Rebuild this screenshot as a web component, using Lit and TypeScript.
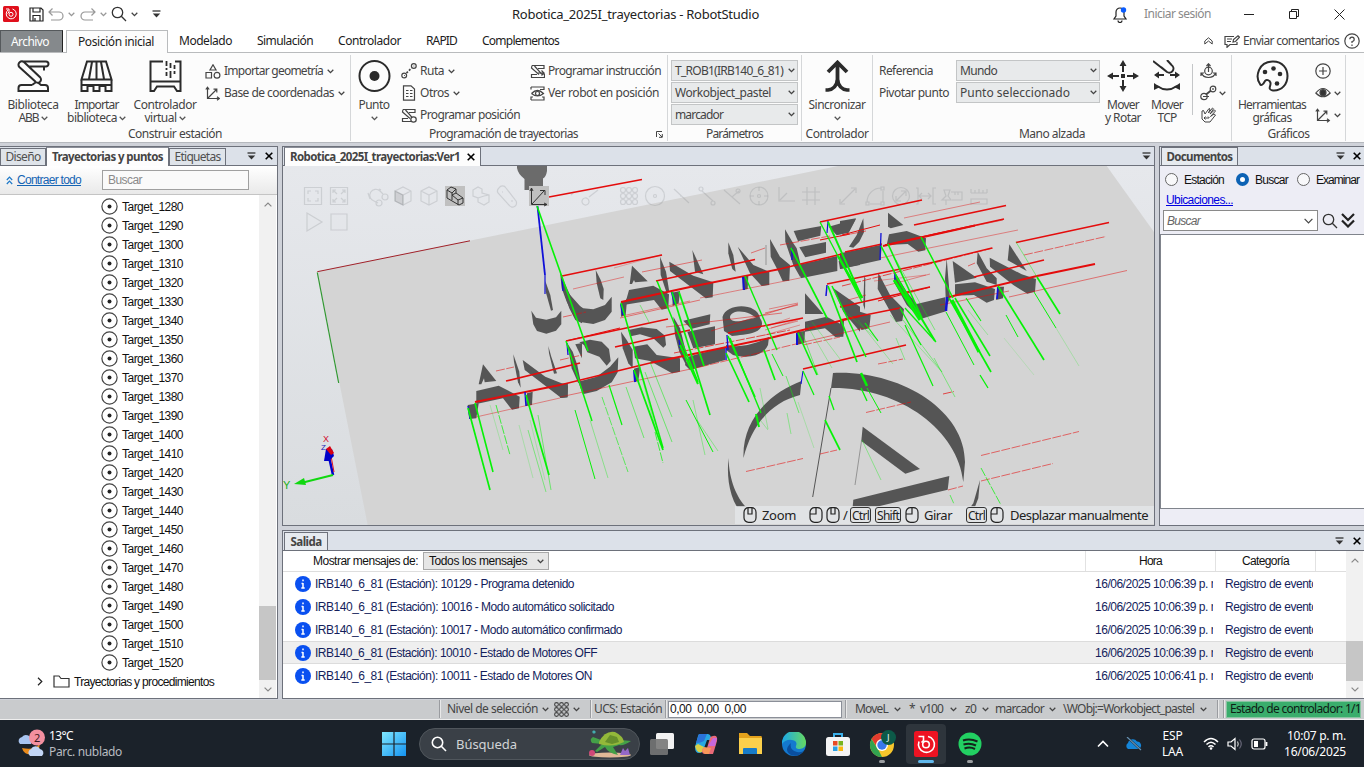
import { LitElement, html, svg, css, unsafeCSS } from "lit";
import { customElement, property } from "lit/decorators.js";

const spacing = unsafeCSS(
  Array.from({ length: 72 }, (_, i) => `.ml${i}{margin-left:${i}px}`).join("")
);

/** Label whose tracking is tuned so that the text takes a given width. */
@customElement("fit-text")
class FitText extends LitElement {
  @property() text = "";
  @property({ type: Number }) w = 0;
  static styles = css`
    :host { display: inline-block; white-space: pre; flex: none; }
  `;
  firstUpdated() {
    const natural = this.getBoundingClientRect().width;
    this.style.letterSpacing = `${(this.w - natural) / this.text.length}px`;
    this.style.width = `${this.w}px`;
  }
  render() {
    return html`${this.text}`;
  }
}

const t = (text: string, w: number, cls = "") =>
  html`<fit-text class=${cls} .text=${text} .w=${w}></fit-text>`;
const ic = (w: number, h: number, body: unknown, cls = "") =>
  html`<svg class="ic ${cls}" width=${w} height=${h} viewBox="0 0 ${w} ${h}">${body}</svg>`;
const chev = (cls = "") => ic(7, 5, svg`<path d="M.7.8 3.5 3.6 6.3.8" stroke-width="1.3"/>`, cls);
const pin = (cls = "") =>
  ic(9, 8, svg`<path d="M.5 1H8.5" stroke="#222"/><path d="M.8 3.6H8.2L4.5 7.6z" fill="#333" stroke="none"/>`, cls);
const cross = (cls = "") => ic(8, 8, svg`<path d="M.7.7 7.3 7.3M7.3.7.7 7.3" stroke="#000" stroke-width="1.6"/>`, cls);

const robotArm = svg`<path d="M2.300 7 18.300 21.500A3.200 3.200 0 0 0 23.300 17.500L7.500 2.500A3.200 3.200 0 0 0 2.300 7zM5 1.500H29A2.500 2.500 0 0 1 29 6.500H12M27 6.500V10.500M15 25H4.500A3 3 0 0 0 1.500 28V31H31V28A3 3 0 0 0 28 25H24L21 22.500M15 25 18.500 22.500"/>`;
const miniArm = svg`<path d="M2 1.500H14V4.500H8M2 1.500 1.500 4 9 10.500M4.500 2 11.500 10H14.500V13.500H1.500V10.500H7"/>`;
const axes = svg`<path d="M2.500 1.500V12.500H14M2.500 12.500 11.500 3.500M.8 3.500 2.500 1.200 4.200 3.500M12 10.800 14.300 12.500 12 14.200M8.500 3.200H11.800V6.500"/>`;
const magnifier = (s: string, w = 1.3) => svg`<circle cx="6.500" cy="6.500" r="5.200" stroke=${s} stroke-width=${w}/><path d="M10.300 10.300 15 15" stroke=${s} stroke-width=${w}/>`;

/* ---- 3D scene geometry ---- */
const project = (ox: number, oy: number, list: string[]) =>
  list.map((p) =>
    p.split(" ").map((pt) => {
      const [x, y] = pt.split(",").map(Number);
      return `${(ox + x / 3).toFixed(1)},${(oy + y / 3).toFixed(1)}`;
    }).join(" ")
  );

const solids = [
  ...project(282, 145, [
    "790,408 805,450 813,495 807,497 791,440",
    "748,497 762,518 793,524 822,517 838,497 838,538 822,557 793,566 765,558 754,538",
    "843,420 856,440 900,490 900,535 880,525 862,490 845,440",
    "603,658 643,708 608,712 606,700 598,718 590,718",
    "583,738 650,722 713,755 711,790 690,794 663,760 583,777",
    "557,780 590,775 583,820 562,822",
    "694,628 712,680 716,728 708,712 696,650",
    "722,645 790,695 858,722 857,757 838,759 728,675",
    "799,603 808,635 825,685 816,686 801,625",
    "735,745 752,740 750,780 732,783",
    "880,598 900,594 900,640",
  ]),
  ...project(560, 165, [
    "0,320 10,345 28,385 45,425 60,460 40,450 20,410 5,370",
    "33,395 45,415 70,430 100,433 135,420 155,395 155,440 135,465 100,477 65,472 40,448",
    "107,315 122,345 131,372 130,405 121,400 110,355",
    "216,302 263,349 225,352 222,345 216,357 209,357",
    "207,375 280,362 327,388 325,430 305,434 282,405 190,420 200,400",
    "182,412 201,406 197,450 183,455",
    "300,275 318,320 328,380 318,378 302,330",
    "328,290 400,332 460,352 458,397 437,400 385,360 330,318",
    "397,255 413,290 430,328 405,320",
    "336,383 360,378 356,415 338,423",
    "505,232 520,270 527,320 517,312 505,265",
    "533,245 580,300 628,320 628,360 605,363 570,325",
    "630,222 660,275 690,300 688,347 668,349 650,310 632,275",
    "548,334 565,332 563,372 548,375",
    "675,193 697,230 710,250 722,300 720,335 700,300 676,230",
    "701,198 784,183 781,212 714,229",
    "718,247 798,231 798,263 736,277",
    "712,300 832,273 832,318 722,340",
    "806,185 888,162 866,203 830,211",
    "836,288 900,275 900,300 840,312",
    "0,657 24,654 22,697 0,699",
    "22,535 38,560 52,600 62,650 55,655 35,610",
    "58,532 90,524 125,530 147,552 152,588 140,602 118,575 82,562 72,540",
    "55,650 110,635 150,605 175,577 173,622 155,652 110,678 68,688",
    "183,500 200,525 218,555 218,610 205,595 188,550",
    "205,495 245,487 290,492 315,512 318,540 310,548 280,520 240,508 212,514",
    "220,545 262,538 290,570 360,580 360,620 336,625 270,588 225,580",
    "222,611 241,605 235,648 222,652",
    "340,455 360,490 378,560 378,600 358,560 345,510",
    "370,467 451,448 449,478 393,492",
    "382,500 465,484 465,538 400,550",
    "385,575 495,545 495,585 390,615 375,600",
    "735,385 790,447 735,447",
    "735,470 800,455 852,482 850,515 826,516 795,490 735,500",
    "710,500 735,498 733,534 710,540",
    "818,368 900,425 900,500 850,440",
  ]),
  ...project(840, 145, [
    "0,228 48,220 28,258 0,265",
    "70,220 72,262 58,290 40,308 27,305 50,270",
    "0,325 125,299 122,345 0,372",
    "144,203 190,240 152,250 144,245",
    "147,268 200,258 258,280 256,316 235,320 203,297 140,300",
    "0,445 60,500 92,510 88,550 65,555 0,478",
    "0,525 12,528 10,568 0,572",
    "73,392 76,400 75,495 70,480",
    "115,383 150,450 192,493 187,528 168,531 113,432",
    "164,380 200,440 230,477 315,457 318,499 242,522 200,480 162,412",
    "338,348 410,398 345,413",
    "345,418 405,412 465,432 462,465 440,473 402,450 345,452",
    "320,340 325,400 330,458 318,490 315,400",
    "413,320 440,370 470,400 470,420 440,410 410,355",
    "449,338 545,388 588,402 585,440 562,446 520,420 450,365",
    "508,298 560,378 503,346",
    "475,425 492,425 489,460 468,465",
    "68,845 240,972 196,986 64,888",
    "328,993 323,1034 110,1085 38,1085 40,1064",
    "420,1005 400,1075 392,1085 405,1085 415,1060",
  ]),
];

// Each entry: x1 y1 x2 y2 width
const reds = [
  [549,197,642,179.500,1.500],[562,276,662,255,1.600],[573,289,624,277,.6],[563,317,586,312,.8],[642,272,702,260,.7],[656,281,755,259.500,1.500],
  [621,302,690,287,1.800],[690,287,780,269,1.800],[780,269,842,254,1.600],[620,318,700,300,.7],[700,298,800,278,.6],[751,253,765,248,.7],[780,245,830,236,.8],
  [820,222,922,200,1.500],[904,218,980,202,.6],[914,225,1006,205.500,1.700],[842,235,880,225,1],[820,240,850,234,1.200],[885,245,1004,219,1.400],
  [883,246,975,225.500,1.800],[930,235,1003,220,.7],[840,236,866,231,.8],[880,258,1018,230,.6],[845,252,882,244,1.300],
  [566,341,620,328,1],[566,341,668,319,1.500],[622,316,690,301,.6],[615,347,690,330,1.600],[666,327,782,313,.7],[674,353,790,330,.9],[711,331,798,304,.7],[765,313,798,305,.7],[769,309,798,303,.6],[771,328,798,321,.6],
  [475,402,560,385,2],[560,385,650,363,1.700],[650,363,770,338,1.800],[770,338,860,316,1.900],[506,381,580,363,1.700],[496,371,514,367,.8],[560,360,582,355,.8],[476,417,560,398,.6],[560,397,700,367,.7],
  [700,367,800,343,.8],[728,333,803,318,1.600],[800,343,890,322,.7],[842,286,993,248,.9],[827,284,930,263,1.300],[930,263,992,248,1.300],[840,307,930,287,1.500],[840,320,900,308,1.500],
  [848,300,866,295,.7],[874,281,926,275,.5],[885,286,930,274,.6],[878,301,930,287,1],[949,297,1037,276,2],[1037,276,1095,264,2],[974,277,1044,260,1.400],[1016,242.500,1109,222.500,1.700],[1024,255,1106,236.500,.8],
  [940,305,1009,291,.7],[1009,297,1127,270.500,.7],[968,266,975,263,.8],[803,369,906,345,1.700],[803,345,840,337,.8],[878,364,903,359,.8],[866,412.500,911,402,.8],[943,394,954,391.500,.9],
  [746,471.500,803,458.500,.8],[820,454,837,450,.8],[981,455.500,1079,431.500,.8],[981,481,1053,463.500,.8],[948,490,963,486,.8],[614,268,662,254.500,.4],[765,335,800,325,.5],[765,330,800,319,.5],[767,326,790,318,.5],
] as number[][];

const greens = [
  [537,206,562,277,1.600],[562,277,588,351,1.600],[468,408,490,490,1.700],[475,403,493,472,1.600],[490,405,503,450,.3],[496,405,510,455,.9],[526,395,549,475,1.700],[530,420,545,480,.3],[528,430,546,492,.6],[538,415,551,490,.7],[519,425,533,478,.3],
  [566,341,592,421,1.500],[575,410,595,479,1],[590,420,608,478,.5],[602,397,628,472,.8],[609,385,622,425,1.200],[626,387,644,438,.7],[621,303,663,448,1.600],[634,370,663,450,1.800],[640,370,656,430,.5],[645,372,672,442,.7],[650,362,672,417,.7],[655,432,663,463,.9],[657,281,698,382,1.500],[672,292,710,415,1.700],[679,292,704,366,1.800],[680,345,698,384,2],[686,400,713,452,1],[693,400,705,455,.5],[697,420,718,451,.5],[640,305,650,324,.6],
  [745,276,777,350,1.400],[791,248,827,318,1.700],[820,222,862,302,1.300],[828,222,862,298,1.900],[838,256,862,298,2.500],[726,353,749,402,1.700],[728,336,755,397,1.700],[730,338,761,413,1.400],[764,350,775,380,1.700],[772,354,783,376,1],[760,388,768,429,.4],[756,414,759,427,2],[757,416,768,430,.4],[786,376,799,413,.7],
  [798,333,817,375,1.600],[802,332,818,375,.7],[807,325,832,368,.4],[812,322,840,359,.4],[828,286,857,362,1.700],[832,286,866,357,1.500],[843,310,878,340,.4],[865,323,878,341,1.200],[858,320,893,364,.4],[803,371,814,395,1.200],[798,402,814,448,.3],[787,413,791,434,.5],[829,396,834,410,1.300],[825,420,840,450,1.700],[861,373,867,386,2.500],[861,388,867,401,1.300],[867,388,881,413,1],
  [881,246,912,306,1.600],[888,244,922,318,1.600],[896,260,935,330,.6],[921,237,953,298,1.500],[896,276,935,341,2],[894,280,920,320,3],[905,308,936,342,1.300],[900,308,921,345,1.300],[905,325,933,386,1.200],[890,315,942,372,.4],[903,320,942,372,.6],[896,338,905,360,.5],[934,358,955,397,.6],[949,298,991,372,1.700],[955,298,990,356,1.600],[952,300,979,352,3],[946,312,974,365,1],[966,298,981,321,1.100],[968,310,988,335,.4],[980,375,988,388,1.300],[998,286,1044,360,1.700],[1016,242,1037,277,.6],[1037,277,1060,314,1.700],[1034,292,1056,328,1],[1056,328,1079,366,.3],[1006,315,1018,337,1],[1004,338,1034,375,.2],[862,440,881,480,.5],[981,468,1001,505,.9],[950,495,954,504,.8],
] as number[][];

const blues = [
  [537.500,206,545,275,1.800],[545,275,545,294,1.200],[562,279,563,291,1.300],[621,304,623,315,2],[672,292,675,304,2.500],[743,277,744,290,2],[792,248,792,260,1.400],[828,221,827,233,1.200],[567,343,568,355,1.300],[679,340,680,348,1.300],[634,370,635,382,2],[525,392,526,406,1.500],[468,406,470,419,1.300],[727,335,728,350,1.400],[726,348,726,360,1.400],[797,333,797,345,2],[827,285,826,296,1.500],[881,233,880,260,1.300],[895,273,895,283,1.500],[947,297,946,311,2.500],[998,287,997,299,1.800],[803,371,801,384,1.100],
] as number[][];

const lines = (list: number[][], color: string) =>
  list.map(([a, b, c, d, w]) => svg`<line x1=${a} y1=${b} x2=${c} y2=${d} stroke=${color}
    stroke-width=${Math.max(w, 0.8)} stroke-opacity=${w < 1 ? w * 0.9 : 1}
    stroke-dasharray=${w >= 0.8 && w < 1 ? "9 1.500" : "none"}/>`);

const tool = (x: number, y: number, d: string) =>
  svg`<path transform="translate(${x} ${y})" d=${d}/>`;

@customElement("station-view")
class StationView extends LitElement {
  static styles = css`
    :host { display: block; height: 359px; }
    svg { display: block; }
    text { font: 11px "Liberation Sans", sans-serif; }
    .small { font-size: 8px; }
    .mid { font-size: 9px; }
  `;
  render() {
    const cube = "M-8-5 0-9 8-5V5L0 9-8 5zM-8-5 0-1 8-5M0-1V9";
    return html`<svg width="871" height="359" viewBox="283 166 871 359" fill="none" stroke-linecap="butt">
      <defs><linearGradient id="bg" x1="0" y1="0" x2="0" y2="1">
        <stop offset="0" stop-color="#e6e8ec"/><stop offset="1" stop-color="#d9dcdf"/></linearGradient></defs>
      <rect x="283" y="166" width="871" height="359" fill="url(#bg)"/>
      <path d="M317.300 271.700 838 166H1106.700L1154 232V525H367.700z" fill="#d4d4d4"/>
      <path d="M317.300 271.700 470 240.800" stroke="#a02028"/>
      <path d="M317.300 272.500 338.700 383" stroke="#309830" stroke-width="1.200"/>
      <path d="M517 166H547V171Q546 177 543 178.500V190H524.500V179Q518 174 517 168z" fill="#6b6b6b"/>
      <g stroke="#777c80" stroke-opacity=".22" stroke-width="1.200">
        ${tool(313,196,"M-8.500-8.500H8.500V8.500H-8.500zM-5-2V-5H-2M2-5H5V-2M5 2V5H2M-2 5H-5V2")}
        ${tool(339,196,"M-8.500-8.500H8.500V8.500H-8.500zM-6-6-2-2M6-6 2-2M-6 6-2 2M6 6 2 2M-6-3V-6H-3M3-6H6V-3M6 3V6H3M-3 6H-6V3")}
        ${tool(377,196,"M-3 5A6 6 0 1 1 3-5M3-5 6-2M-3 5 1 7M5 1a3 3 0 1 0 6 0 3 3 0 1 0-6 0M-1 7a3 3 0 1 0 6 0 3 3 0 1 0-6 0M-9-3-7 3M2-7 4-6")}
        ${tool(403,196,cube)}${tool(429,196,cube)}
        <path d="M395 191 403 195V205L395 201z" fill="#777" fill-opacity=".2"/>
        ${tool(481,196,"M-8-6-3-9 1-7V-3L8-1V6L3 9-3 6V2L-8 0zM-3 2 3 0 8-1")}
        ${tool(507,196,"M-8-8A4 4 0 0 1-1-8L9 5A4 4 0 0 1 2 9L-9-3A4 4 0 0 1-8-8M-5-4h1M4 5h2")}
        ${tool(590,196,"M-1 1 8-6M-5 2A3.500 3.500 0 1 0-4 9 3.500 3.500 0 0 0-5 2M-19-1-16-4")}
        ${[0,1,2].map(i=>[0,1,2].map(j=>svg`<circle cx=${623+i*6} cy=${190+j*6} r="2.500"/>`))}
        <circle cx="655" cy="196" r="9.500"/><circle cx="655" cy="196" r="1.500"/>
        ${tool(681,196,"M-7-7 8 7M-1 0h2")}${tool(707,196,"M-5-5 6 5M-8-7a2 2 0 1 0 4 0 2 2 0 1 0-4 0M4 7a2 2 0 1 0 4 0 2 2 0 1 0-4 0")}
        ${tool(732,196,"M-8-6 0 1 7-5M0 1 8 8M6-7a2 2 0 1 0 .1 0")}
        <circle cx="759" cy="196" r="9"/><circle cx="759" cy="196" r="1.500"/>${tool(759,196,"M-9 0H-5M5 0H9M0-9V-5M0 5V9")}
        ${tool(786,196,"M-7-9V5H9M-6 4 1-3")}${tool(811,196,"M-4-9V9M4-9V9M-9-4H9M-9 4H9")}
        ${tool(848,196,"M-7 7 7-7M-8 3V8H-3M3-8H8V-3")}${tool(875,196,"M-8 6A14 14 0 0 1 6-8M8-5V6M-5 8H6M-9 6h3v3h-3zM6-9h3v3h-3zM6 6h3v3h-3z")}
        <circle cx="901" cy="196" r="8.500"/>${tool(901,196,"M-5 5 5-5M0-5H5V0M-5 0V5H0")}
        ${tool(927,196,"M-11-8H-9V8H-11M9-8H6V8H9M-7 0H4M-5-3-8 0-5 3M1-3 4 0 1 3")}
        ${tool(953,196,"M-9-6H-3L-5 0-2 4H-11L-7 0zM-2-4H9V4H-1M2-4V-1M5-4V-1M-7 4V9")}
        ${tool(979,196,"M-8-3H8M-8-3V-7M-4-3V-6M0-3V-7M4-3V-6M8-3V-7M-8 3H8V8H-8z")}
        ${tool(314,222,"M-7-9 8 0-7 9z")}${tool(339,222,"M-8-8H8V8H-8z")}
      </g>
      <g fill="#555">${solids.map((p) => svg`<polygon points=${p}/>`)}
        <path d="M722.500 317C726 303 757 302 760 318L759 321C750 309 731 309 730 317 730 321 735 322 741 321L759 317C764 322 763 329 755 332 748 335 738 335 732 336L724 331z"/>
        <path d="M726 345C742 349 760 342 769 337L768 345C762 358 745 358 733 355L726 350z"/>
        <path d="M801.500 381C772 392 742 418 743.500 458 752 424 772 402 800 395z"/>
        <path d="M728.500 458C729 480 737 498 746 507H737C728 492 727 472 728.500 458z"/>
        <path d="M833 373C900 370 965 410 965 462L963.300 482C958 430 900 387 831 388z"/>
      </g>
      <path d="M831 388 812.700 497" stroke="#555" stroke-width="1"/><path d="M861.500 441 855 485M766 245V265" stroke="#555" stroke-width=".5"/>
      ${lines(reds, "#e40c0c")}${lines(blues, "#1010d8")}${lines(greens, "#06f206")}
      <rect x="445" y="186" width="20" height="20" fill="#c0c0c0"/>
      <path transform="translate(455 196)" d="M-8-6-4-9 1-7V-3L8 2V7L4 9-8 2zM-8-6-3-3V4M1-3-3-1M8 2 3 4V9M-3-3 1-7M-3-1 3 4" stroke="#333"/>
      <rect x="529" y="186" width="20" height="20" fill="#c0c0c0"/>
      <path d="M531.500 188V204.500H547M532 204 544 191M530 191 531.500 188 533 191M544 203 547 204.500 544 206M540 190.500H545V195" stroke="#333"/>
      <path d="M333 475 329.500 459" stroke="#0000c8" stroke-width="2.500"/><path d="M334 472 331 456" stroke="#e01020"/>
      <path d="M324 461 326 449 332 449 334 456 329 461z" fill="#0000c8"/><path d="M326 449 330 446 334 453 331 455z" fill="#d80010"/>
      <path d="M333 475 301 483" stroke="#10d810" stroke-width="2.300"/><path d="M294 484 304 478 306 485z" fill="#10d810"/>
      <text x="323" y="442" fill="#d01030" class="mid">X</text><text x="321" y="450" fill="#2020b8" class="small">Z</text><text x="283" y="489" fill="#20b020">Y</text>
    </svg>`;
  }
}

const targets = Array.from({ length: 25 }, (_, i) => `Target_${1280 + i * 10}`);
const messages: [string, number, string][] = [
  ["IRB140_6_81 (Estación): 10129 - Programa detenido", 259, "39"],
  ["IRB140_6_81 (Estación): 10016 - Modo automático solicitado", 299, "39"],
  ["IRB140_6_81 (Estación): 10017 - Modo automático confirmado", 307, "39"],
  ["IRB140_6_81 (Estación): 10010 - Estado de Motores OFF", 282, "39"],
  ["IRB140_6_81 (Estación): 10011 - Estado de Motores ON", 277, "41"],
];

@customElement("app-root")
class AppRoot extends LitElement {
  static styles = css`
    ${spacing}
    * { box-sizing: border-box; }
    :host { display: flex; flex-direction: column; width: 1364px; height: 767px; overflow: hidden;
      font: 12px/14px "Noto Sans", sans-serif; color: #444; background: #cfd2d9; }
    .ic { display: block; flex: none; fill: none; stroke: #444; stroke-width: 1.2; }
    .row { display: flex; align-items: center; }
    .grow { flex: 1; }
    .title { height: 30px; background: #fff; flex: none; padding-bottom: 2px; }
    .title .name { font-size: 13px; line-height: 18px; color: #222; }
    .dim { opacity: .55; }
    .signin { color: #8a8a8a; }
    .tabs { height: 23px; background: #fff; border-bottom: 1px solid #b9bbbd; color: #1c1c1c; flex: none; align-items: stretch; }
    .tabs > * { align-self: center; }
    .tabs .file { width: 63px; height: 22px; background: #85898c; border: 1px solid #55595c; border-right: 1px solid #222; border-bottom: 0; color: #fff; display: flex; align-items: center; padding-left: 10px; align-self: flex-start; }
    .tabs .on { width: 102px; height: 23px; align-self: flex-start; margin-bottom: -1px; background: #fcfcfc; border: 1px solid #b9bbbd; border-bottom: 0; display: flex; align-items: center; padding-left: 11px; }
    .tabs .grey { color: #444; }
    .ribbon { height: 90px; display: flex; background: #fcfcfc; border-bottom: 1px solid #b5b8bd; flex: none; }
    .group { display: flex; flex-direction: column; border-right: 1px solid #d5d7d9; margin: 2px 0; height: 86px; flex: none; padding-top: 5px; }
    .g1 { width: 351px; } .g2 { width: 317px; } .g3 { width: 134px; } .g4 { width: 71px; } .g5 { width: 359px; } .g6 { width: 114px; }
    .gbody { display: flex; height: 67px; }
    .glabel { height: 14px; display: flex; justify-content: center; align-items: center; margin-top: 1px; }
    .big { display: flex; flex-direction: column; align-items: center; flex: none; }
    .big .ic { stroke-width: 2; stroke: #2b2b2b; }
    .big .l1 { margin-top: 6px; height: 13px; line-height: 13px; }
    .big .l2 { height: 13px; line-height: 13px; display: flex; align-items: center; gap: 2px; }
    .big .l2 .ic { stroke: #555; stroke-width: 1.5; margin-top: 1px; }
    .b66 { width: 66px; } .b61 { width: 61px; } .b76 { width: 76px; } .b46 { width: 46px; } .b70 { width: 70px; } .b44 { width: 44px; } .b80 { width: 80px; }
    .col { display: flex; flex-direction: column; align-items: flex-start; flex: none; }
    .col > .row { height: 22px; }
    .c129 { width: 129px; }
    .sel { height: 21px; margin-bottom: 1px; border: 1px solid #c3c5c6; background: #e8eaeb; display: flex; align-items: center; justify-content: space-between; padding: 0 2px 0 3px; }
    .s127 { width: 127px; } .s144 { width: 144px; }
    .vsep { width: 1px; height: 51px; background: #c4c6c8; margin-top: 4px; }
    .work { display: flex; height: 557px; flex: none; padding-top: 3px; }
    .panel { border: 1px solid #6d717b; display: flex; flex-direction: column; background: #fff; flex: none; }
    .left { width: 278px; height: 553px; border-left: 0; }
    .ptabs { height: 19px; background: #dce1e9; border-bottom: 1px solid #6d717b; display: flex; align-items: center; flex: none; }
    .out .ptabs { height: 20px; }
    .ptab { height: 17px; align-self: flex-end; border: 1px solid #6d717b; border-bottom: 0; display: flex; align-items: center; justify-content: center; background: #dfe4ea; color: #505050; }
    .ptab.act { height: 19px; margin-bottom: -1px; background: #fdfdfd; font-weight: 700; font-size: 11.5px; color: #444; border-top-color: #8a8e98; }
    .ptab.idle { height: 18px; margin-bottom: 0; background: #e6eaef; border-top-color: #6d717b; }
    .w46 { width: 46px; } .w123 { width: 123px; } .w57 { width: 57px; } .w197 { width: 197px; } .w77 { width: 77px; } .w44 { width: 44px; }
    .sans { font-family: "Liberation Sans", Arial, sans-serif; font-size: 12px; }
    .tools { height: 29px; background: linear-gradient(#fff, #e9e9e9); border-bottom: 1px solid #c4c4c4; flex: none; }
    .link { color: #1464b4; text-decoration: underline; }
    .ubic { color: #0000e0; text-decoration: underline; }
    .find { width: 147px; height: 20px; border: 1px solid #a0a0a0; background: #fafafa; display: flex; align-items: center; padding-left: 5px; color: #8a8a8a; }
    .treewrap { display: flex; flex: 1; }
    .tree { flex: 1; padding-top: 2px; color: #111; }
    .tree .row { height: 19px; }
    .tree .indent { margin-left: 101px; }
    .sb { width: 17px; background: #f1f1f1; display: flex; flex-direction: column; align-items: center; padding: 7px 0 6px; margin-right: 1px; }
    .sb .thumb { width: 17px; background: #c6c6c6; }
    .th1 { height: 74px; margin-top: 399px; } .th2 { height: 40px; margin-top: 78px; }
    .sb .ic { stroke: #888; }
    .right { display: flex; flex-direction: column; margin-left: 4px; gap: 4px; }
    .top { display: flex; gap: 4px; }
    .view { width: 873px; height: 380px; position: relative; }
    .docs { width: 205px; height: 380px; border-right: 0; background: #ededf5; }
    .hint { position: absolute; right: 0; bottom: 1px; width: 419px; height: 18px; background: #e4e6e8cc; font-size: 13px; color: #222; padding-left: 8px; }
    .key { border: 1px solid #333; border-radius: 3px; height: 16px; line-height: 13px; font-size: 12px; display: flex; align-items: center; justify-content: center; flex: none; }
    .k21 { width: 21px; } .k26 { width: 26px; }
    .dr { height: 27px; color: #111; } .du { height: 14px; padding-left: 6px; }
    .radio { width: 13px; height: 13px; border-radius: 50%; border: 1px solid #666; background: #f8f8fa; flex: none; }
    .radio.sel1 { border: 4px solid #0c62b4; background: #fff; }
    .dq { margin-top: 3px; }
    .dfind { width: 155px; height: 21px; border: 1px solid #8a8a8a; background: #fff; padding: 0 4px 0 3px; justify-content: space-between; color: #666; font-style: italic; }
    .dlist { height: 275px; background: #fff; border: 1px solid #80848c; margin-top: 3px; border-right: 0; }
    .out { width: 1082px; height: 169px; border-right: 0; }
    .owrap { display: flex; flex: 1; }
    .ohead { height: 21px; border-bottom: 1px solid #dedede; color: #111; }
    .combo { width: 126px; height: 18px; border: 1px solid #a8a8a8; background: #e6e6e6; display: flex; align-items: center; justify-content: space-between; padding: 0 4px 0 5px; }
    .hc { height: 20px; border-left: 1px solid #e2e2e2; display: flex; align-items: center; justify-content: center; }
    .hc1 { width: 130px; } .hc2 { width: 100px; } .hc3 { width: 31px; }
    .msg { height: 23px; color: #141e5c; padding-left: 12px; }
    .msg.hl { background: #efefef; border: solid #dcdcdc; border-width: 1px 0; }
    .cell { overflow: hidden; display: flex; flex: none; }
    .ce1 { width: 118px; } .ce2 { width: 88px; margin-left: 12px; margin-right: 33px; }
    .status { height: 20px; background: #c9cbcd; border-bottom: 1px solid #eee; flex: none; padding-bottom: 1px; }
    .ss { width: 2px; height: 18px; background: #e8e8e8; border-left: 1px solid #9a9ca0; flex: none; }
    .ucs { width: 174px; height: 17px; background: #fff; border: 1px solid #8b8f98; color: #111; padding-left: 1px; }
    .green { width: 135px; height: 17px; background: #3aad6c; border: 1px solid #89c5a2; color: #0d2015; overflow: hidden; display: flex; align-items: center; padding-left: 3px; }
    .task { height: 47px; background: #1b222a; color: #fff; flex: none; }
    .weather { width: 106px; margin-left: 2px; line-height: 16px; }
    .weather .b { color: #b8bcc0; }
    .pill { width: 221px; height: 32px; border-radius: 16px; background: #3a4047; border: 1px solid #50565c; padding-left: 11px; color: #d2d4d6; font-size: 13px; }
    .slot { width: 44px; height: 47px; display: flex; align-items: center; justify-content: center; flex: none; }
    .app { width: 40px; height: 40px; border-radius: 4px; display: flex; flex-direction: column; align-items: center; justify-content: center; padding-top: 5px; gap: 2px; }
    .app.act { background: #2e353c; }
    .bar { width: 16px; height: 3px; border-radius: 2px; background: #60b8ec; }
    .dot { width: 6px; height: 3px; border-radius: 2px; background: #9a9da0; }
    .lang { line-height: 16px; align-items: center; }
    .clock { align-items: flex-end; line-height: 16px; }
  `;

  big(cls: string, icon: unknown, l1: unknown, l2: unknown) {
    return html`<div class="big ${cls}">${icon}<div class="l1">${l1}</div><div class="l2">${l2}</div></div>`;
  }
  sel(cls: string, text: string, w: number) {
    return html`<div class="sel ${cls}">${t(text, w)}${chev()}</div>`;
  }

  titleBar() {
    return html`<div class="title row">
      ${ic(16, 16, svg`<rect width="16" height="16" rx="1.500" fill="#e0101c" stroke="none"/><path d="M5 4A5 5 0 1 0 9.500 3M3 3H6V6L4.500 7.500" stroke="#fff" stroke-width="1"/><circle cx="8" cy="8.300" r="2" stroke="#fff" stroke-width="1"/>`, "ml3")}
      ${ic(15, 15, svg`<path d="M1 1H12L14 3V14H1zM4 1V5H11V1M4 14V8.500H11V14M6 11V14" stroke="#222"/>`, "ml10")}
      ${ic(16, 13, svg`<path d="M4.500.5 1 4 4.500 7.500M1 4H11A4 4 0 0 1 11 12H3"/>`, "ml4 dim")}${chev("ml4 dim")}
      ${ic(16, 13, svg`<path d="M11.500.5 15 4 11.500 7.500M15 4H5A4 4 0 0 0 5 12H13"/>`, "ml5 dim")}${chev("ml4 dim")}
      ${ic(16, 16, magnifier("#333"), "ml4")}${chev("ml4")}
      ${pin("ml14")}
      <span class="ml60"></span><span class="ml71"></span><span class="ml71"></span><span class="ml71"></span><span class="ml71"></span><span class="ml7"></span>
      ${t("Robotica_2025I_trayectorias - RobotStudio", 247, "name")}
      <span class="grow"></span>
      ${ic(16, 17, svg`<path d="M2 13H14L12 10V6A4 4 0 0 0 4 6V10zM6 14.500A2 2 0 0 0 10 14.500" stroke="#222"/><circle cx="11.500" cy="4" r="2.700" fill="#0a5cff" stroke="none"/>`)}
      ${t("Iniciar sesión", 67, "signin ml16")}
      ${ic(10, 10, svg`<path d="M0 5.500H10" stroke="#222" stroke-width="1"/>`, "ml33")}
      ${ic(10, 10, svg`<path d="M.5 2.500H7.500V9.500H.5zM2.500 2.500V.5H9.500V7.500H7.500" stroke="#222" stroke-width="1"/>`, "ml35")}
      ${ic(11, 11, svg`<path d="M.5.5 10.500 10.500M10.500.5.5 10.500" stroke="#222" stroke-width="1"/>`, "ml35")}<span class="ml19"></span>
    </div>
    <div class="tabs row">
      <div class="file">${t("Archivo", 38)}</div><div class="on ml3">${t("Posición inicial", 76)}</div>
      ${t("Modelado", 53, "ml11")}${t("Simulación", 56, "ml25")}${t("Controlador", 63, "ml25")}${t("RAPID", 31, "ml25")}${t("Complementos", 77, "ml25")}
      <span class="grow"></span>
      ${ic(9, 8, svg`<path d="M.8 4 4.500.8 8.200 4M.8 4V7L4.500 4 8.200 7V4" stroke-width="1"/>`)}
      ${ic(16, 13, svg`<path d="M10 1.500H1V9.500H3V12.300L6 9.500H13V7M3 4H8M3 6.500H7M9 7 9.500 4.500 14 .8 15.500 2.200 11.500 6.500z"/>`, "ml11")}
      ${t("Enviar comentarios", 96, "ml3 grey")}
      ${ic(16, 16, svg`<circle cx="8" cy="8" r="7.200"/><path d="M5.800 6.200A2.200 2.200 0 1 1 8 8.500V10M8 11.500V13"/>`, "ml5")}<span class="ml4"></span>
    </div>`;
  }

  ribbon() {
    return html`<div class="ribbon">
      <div class="group g1"><div class="gbody">
        ${this.big("b66", ic(33, 32, robotArm), t("Biblioteca", 51), html`${t("ABB", 20)}${chev()}`)}
        ${this.big("b61", ic(33, 32, svg`<path d="M7 1.500H26L31.500 19.500H1.500zM12 2 9 19M16.500 2V19M21 2 24 19M1.500 19.500V31H7.500V26H13.500V31H19.500V26H25.500V31H31.500V19.500M1.500 25H31.500"/>`), t("Importar", 44), html`${t("biblioteca", 50)}${chev()}`)}
        ${this.big("b76", ic(33, 32, svg`<path d="M14 1.500H1.500V31H5L8 26.500H25L28 31H31.500V1.500H26M1.500 21.500H31.500"/><path d="M17.500 1V6M17.500 8V10M17.500 12V16M21.500 3V8M21.500 11V18M25.500 5V9M25.500 11V14" stroke-width="1.800"/>`), t("Controlador", 63), html`${t("virtual", 32)}${chev()}`)}
        <div class="col ml2">
          <div class="row">${ic(16, 15, svg`<path d="M8 .8 11 6H5zM1 8.500H6.500V14H1z"/><circle cx="12" cy="11.200" r="2.900"/>`)}${t("Importar geometría", 99, "ml3")}${chev("ml4")}</div>
          <div class="row">${ic(15, 15, axes)}${t("Base de coordenadas", 110, "ml4")}${chev("ml4")}</div>
        </div></div><div class="glabel">${t("Construir estación", 94)}</div></div>
      <div class="group g2"><div class="gbody">
        ${this.big("b46", ic(33, 32, svg`<circle cx="16.500" cy="16" r="15"/><circle cx="16.500" cy="16" r="5" fill="#2b2b2b" stroke="none"/>`), t("Punto", 31), chev())}
        <div class="col c129 ml4">
          <div class="row">${ic(16, 16, svg`<circle cx="3.200" cy="12.500" r="2.400"/><circle cx="12.800" cy="3" r="2.400"/><path d="M5.500 10 10.500 5" stroke-dasharray="2 1.500" stroke-width="1.700"/><path d="M3 12.500h.8M12.500 3h.8"/>`)}${t("Ruta", 24, "ml3")}${chev("ml4")}</div>
          <div class="row">${ic(16, 16, svg`<path d="M2.500 .8H10L13.500 4V15.200H2.500zM5 5.500H7.500M5 8.500H7.500M5 11.500H7.500M9 5.500H11.500M9 8.500H11.500M9 11.500H11.500"/>`)}${t("Otros", 29, "ml3")}${chev("ml4")}</div>
          <div class="row">${ic(16, 15, svg`${miniArm}<circle cx="12.500" cy="11.500" r="2.700" fill="#fcfcfc"/>`)}${t("Programar posición", 100, "ml3")}</div>
        </div>
        <div class="col">
          <div class="row">${ic(15, 15, svg`${miniArm}<path d="M8 9H14M11.500 6.500 14 9 11.500 11.500"/>`)}${t("Programar instrucción", 113, "ml3")}</div>
          <div class="row">${ic(15, 15, svg`<path d="M1 1H14V3.500H10M1 1V3.500M1.500 7.500Q7.500 1.500 13.500 7.500 7.500 12.500 1.500 7.500M1 14H14V11H12M1 14V11H3"/><circle cx="7.500" cy="7.500" r="2"/>`)}${t("Ver robot en posición", 111, "ml3")}</div>
        </div></div>
        <div class="glabel"><span class="ml60"></span><span class="ml18"></span>${t("Programación de trayectorias", 149)}<span class="grow"></span>${ic(7, 7, svg`<path d="M.5 6V.5H6M2.500 2.500 6 6M6.300 3V6.300H3" stroke-width="1"/>`)}<span class="ml4"></span></div></div>
      <div class="group g3"><div class="gbody"><div class="col ml3">
        ${this.sel("s127", "T_ROB1(IRB140_6_81)", 108)}${this.sel("s127", "Workobject_pastel", 96)}${this.sel("s127", "marcador", 48)}</div></div>
        <div class="glabel">${t("Parámetros", 57)}</div></div>
      <div class="group g4"><div class="gbody">${this.big("b70", ic(25, 32, svg`<path d="M12.500 2V23M3 12 12.500 2.500 22 12" stroke-width="3.800"/><path d="M.5 30H3Q11 29 12.500 20 14 29 22 30H24.500" stroke-width="3.600"/>`), t("Sincronizar", 57), chev())}</div>
        <div class="glabel">${t("Controlador", 63)}</div></div>
      <div class="group g5"><div class="gbody">
        <div class="col ml6"><div class="row">${t("Referencia", 54)}</div><div class="row">${t("Pivotar punto", 70)}</div></div>
        <div class="col ml7">${this.sel("s144", "Mundo", 37)}${this.sel("s144", "Punto seleccionado", 110)}</div>
        ${this.big("b44 ml1", ic(32, 32, svg`<path d="M16 4V12M16 20V28M4 16H12M20 16H28"/><path d="M16 0 19.500 6H12.500zM16 32 12.500 26H19.500zM0 16 6 12.500V19.500zM32 16 26 19.500V12.500zM14 14h4v4h-4z" fill="#2b2b2b" stroke="none"/>`), t("Mover", 32), t("y Rotar", 36))}
        ${this.big("b44", ic(28, 32, svg`<path d="M0 1 14 12A4 4 0 0 0 18.500 5L14 0M8 7 14 12M4 15H11M17 15H24M4 26Q14 33 24 26"/><path d="M1 15 6 11.500V18.500zM27 15 22 18.500V11.500zM1 23V30L7 27zM27 23V30L21 27z" fill="#2b2b2b" stroke="none"/>`), t("Mover", 32), t("TCP", 19))}
        <div class="vsep ml3"></div>
        <div class="col ml7">
          <div class="row">${ic(17, 16, svg`<circle cx="8.500" cy="8" r="3.800"/><path d="M8.500 9V1M6.500 3 8.500.8 10.500 3M1.500 10Q3 14.500 8.500 14.500 14 14.500 15.500 10M1 13V10H4M16 13V10H13"/>`)}</div>
          <div class="row">${ic(17, 16, svg`<circle cx="4" cy="11.500" r="3.200"/><circle cx="13" cy="4" r="2.800"/><path d="M6 9.500 11 5.500" stroke-width="1.800"/><path d="M3 11.500H9M13 3V5"/>`)}${chev("ml2")}</div>
          <div class="row">${ic(17, 16, svg`<path d="M2 4V12L5 15H10L15.500 8 14 7 10.500 9.500 15.500 4 14.500 3 10 7 13.500 1.800 12.500 1 8.500 6 10 2 9 1.500 5 7 3.500 3.500zM4 11H9M5.500 9.500 4 11 5.500 12.500M8 9.500 9.500 11" stroke-width="1"/>`)}</div>
        </div></div><div class="glabel">${t("Mano alzada", 66)}</div></div>
      <div class="group g6"><div class="gbody">
        ${this.big("b80", ic(33, 32, svg`<path d="M4 24C-1 17 2 1.500 17 1.500 27 1.500 31.500 9 31.500 16 31.500 24 26 31 17 30.500 11 29.500 15 26 14.500 23 14 20 10 19 9 21 7 25 5 26 4 24z"/><g fill="#2b2b2b" stroke="none"><circle cx="9" cy="12" r="2.300"/><circle cx="17.500" cy="8.500" r="2.300"/><circle cx="24" cy="14" r="2.300"/><circle cx="21" cy="23.500" r="2.300"/></g>`), t("Herramientas", 68), t("gráficas", 39))}
        <div class="col ml3">
          <div class="row">${ic(16, 16, svg`<circle cx="8" cy="8" r="7.200"/><path d="M8 4V12M4 8H12"/>`)}</div>
          <div class="row">${ic(16, 16, svg`<path d="M.8 8Q8-1 15.200 8 8 15.500.8 8z"/><circle cx="8" cy="7.700" r="3" fill="#333"/>`)}${chev("ml3")}</div>
          <div class="row">${ic(16, 15, axes)}${chev("ml3")}</div>
        </div></div><div class="glabel">${t("Gráficos", 42)}</div></div>
    </div>`;
  }

  left() {
    return html`<div class="panel left">
      <div class="ptabs"><div class="ptab w46">${t("Diseño", 35)}</div><div class="ptab act w123">${t("Trayectorias y puntos", 111)}</div><div class="ptab w57">${t("Etiquetas", 46)}</div><span class="grow"></span>${pin()}${cross("ml9")}<span class="ml4"></span></div>
      <div class="tools row sans">${ic(7, 9, svg`<path d="M.8 4 3.500 1.200 6.200 4M.8 8 3.500 5.200 6.200 8" stroke="#1d78c8"/>`, "ml6")}${t("Contraer todo", 64, "link ml4")}<div class="find ml21">${t("Buscar", 34)}</div></div>
      <div class="treewrap sans"><div class="tree">
        ${targets.map((x) => html`<div class="row">${ic(17, 17, svg`<circle cx="8.500" cy="8.500" r="7.600"/><circle cx="8.500" cy="8.500" r="2" fill="#222" stroke="none"/>`, "indent")}${t(x, 61, "ml4")}</div>`)}
        <div class="row">${ic(6, 9, svg`<path d="M1 .8 4.800 4.500 1 8.200" stroke="#222"/>`, "ml37")}${ic(17, 13, svg`<path d="M1 1H6L8 3.500H16V12H1z" stroke="#333"/>`, "ml10")}${t("Trayectorias y procedimientos", 140, "ml4")}</div>
      </div>
      <div class="sb">${ic(8, 5, svg`<path d="M.6 4.400 4 1 7.400 4.400"/>`)}<div class="thumb th1"></div><span class="grow"></span>${ic(8, 5, svg`<path d="M.6.6 4 4 7.400.6"/>`)}</div></div>
    </div>`;
  }

  mouse(mode: string, cls: string) {
    return ic(14, 16, svg`<rect x="1" y=".7" width="12" height="14.600" rx="4.500" stroke="#222"/><path d=${mode === "mid" ? "M5 1V7H9V1" : "M7 1V7H1"} stroke="#222"/>`, cls);
  }

  center() {
    return html`<div class="top">
      <div class="panel view">
        <div class="ptabs"><div class="ptab act w197 ml1">${t("Robotica_2025I_trayectorias:Ver1", 170)}${cross("ml7")}</div><span class="grow"></span>${pin()}<span class="ml3"></span></div>
        <station-view></station-view>
        <div class="hint row">${this.mouse("mid", "")}${t("Zoom", 34, "ml5")}${this.mouse("l", "ml13")}${this.mouse("mid", "ml3")}${t("/", 5, "ml3")}
          <span class="key k21 ml2">${t("Ctrl", 17)}</span><span class="key k26 ml4">${t("Shift", 22)}</span>${this.mouse("l", "ml4")}${t("Girar", 28, "ml5")}
          <span class="key k21 ml14">${t("Ctrl", 17)}</span>${this.mouse("l", "ml3")}${t("Desplazar manualmente", 138, "ml6")}</div>
      </div>
      <div class="panel docs">
        <div class="ptabs"><div class="ptab act idle w77 ml1">${t("Documentos", 66)}</div><span class="grow"></span>${pin()}${cross("ml8")}<span class="ml3"></span></div>
        <div class="row dr sans"><span class="radio ml5"></span>${t("Estación", 40, "ml6")}<span class="radio sel1 ml12"></span>${t("Buscar", 33, "ml6")}<span class="radio ml9"></span>${t("Examinar", 43, "ml6")}</div>
        <div class="row du sans">${t("Ubicaciones...", 67, "ubic")}</div>
        <div class="row ml3 dq sans"><div class="row dfind">${t("Buscar", 33)}${ic(9, 6, svg`<path d="M.6.8 4.500 4.800 8.400.8"/>`)}</div>${ic(16, 16, magnifier("#333"), "ml4")}${ic(14, 15, svg`<path d="M1 1 7 7 13 1M1 7.500 7 13.500 13 7.500" stroke="#222" stroke-width="2.200"/>`, "ml3")}</div>
        <div class="dlist"></div>
      </div></div>
      <div class="panel out">
        <div class="ptabs"><div class="ptab act idle w44 ml1">${t("Salida", 31)}</div><span class="grow"></span>${pin()}${cross("ml9")}<span class="ml3"></span></div>
        <div class="owrap sans"><div class="grow">
          <div class="row ohead">${t("Mostrar mensajes de:", 105, "ml30")}<div class="combo ml5">${t("Todos los mensajes", 98)}${chev()}</div><span class="grow"></span>
            <div class="hc hc1">${t("Hora", 23)}</div><div class="hc hc2">${t("Categoría", 47)}</div><div class="hc hc3"></div></div>
          ${messages.map(([m, w, s], i) => html`<div class="row msg ${i === 3 ? "hl" : ""}">
            ${ic(16, 16, svg`<circle cx="8" cy="8" r="8" fill="#0a50f0" stroke="none"/><path d="M8 7V12M6.500 7.500H8M6.300 12H9.700M8 3.500V5.300" stroke="#fff" stroke-width="1.500"/>`)}${t(m, w, "ml4")}<span class="grow"></span>
            <div class="cell ce1">${t(`16/06/2025 10:06:${s} p. m.`, 128)}</div><div class="cell ce2">${t("Registro de eventos", 98)}</div></div>`)}
        </div>
        <div class="sb">${ic(8, 5, svg`<path d="M.6 4.400 4 1 7.400 4.400"/>`)}<div class="thumb th2"></div><span class="grow"></span>${ic(8, 5, svg`<path d="M.6.6 4 4 7.400.6"/>`)}</div></div>
      </div>`;
  }

  status() {
    return html`<div class="status row">
      <span class="ml71"></span><span class="ml71"></span><span class="ml71"></span><span class="ml71"></span><span class="ml71"></span><span class="ml71"></span>
      <span class="ss ml13"></span>${t("Nivel de selección", 91, "ml6")}${chev("ml4")}
      ${ic(15, 15, svg`${[2.500, 7.500, 12.500].map((x) => [2.500, 7.500, 12.500].map((y) => svg`<circle cx=${x} cy=${y} r="1.900" stroke-width="1.100"/>`))}`, "ml5")}${chev("ml4")}
      <span class="ss ml10"></span>${t("UCS: Estación", 68, "ml2")}<span class="ss ml3"></span><div class="ucs row ml1 sans">${t("0,00  0,00  0,00", 76)}</div>
      <span class="ss ml3"></span>${t("MoveL", 33, "ml8")}${chev("ml6")}${t("*", 5, "ml8")}${t("v100", 23, "ml6")}${chev("ml7")}${t("z0", 11, "ml8")}${chev("ml6")}${t("marcador", 49, "ml6")}${chev("ml5")}${t("\\WObj:=Workobject_pastel", 131, "ml7")}${chev("ml6")}
      <span class="ss ml10"></span><span class="ss ml4"></span><div class="green ml1">${t("Estado de controlador: 1/1", 131)}</div>
    </div>`;
  }

  taskbar() {
    const slot = (b: unknown) => html`<div class="slot">${b}</div>`;
    return html`<div class="task row">
      ${ic(30, 30, svg`<g stroke="none"><path d="M5 19A9 9 0 0 0 22 20L23 14Q18 22 5 19z" fill="#e98a1a"/><path d="M3 15A4 4 0 0 1 5 8 5 5 0 0 1 14 11V15z" fill="#a8c4f0"/><path d="M13 27A4 4 0 0 1 14 20 5 5 0 0 1 23 20 4 4 0 0 1 25 27z" fill="#c2d5f5"/><circle cx="20" cy="8.500" r="8" fill="#f490a0"/></g><text x="17" y="12.500" fill="#401820" stroke="none" font-size="11">2</text>`, "ml17")}
      <div class="col weather">${t("13°C", 24)}${t("Parc. nublado", 73, "b")}</div>
      <span class="ml71"></span><span class="ml71"></span><span class="ml71"></span><span class="ml4"></span>
      ${slot(ic(24, 24, svg`<defs><linearGradient id="w" x2="1" y2="1"><stop stop-color="#7fe8ff"/><stop offset="1" stop-color="#1492f0"/></linearGradient></defs><path d="M0 0H11.400V11.400H0zM12.600 0H24V11.400H12.600zM0 12.600H11.400V24H0zM12.600 12.600H24V24H12.600z" fill="url(#w)" stroke="none"/>`))}
      <div class="pill row ml3">${ic(16, 16, magnifier("#fff", 1.600))}${t("Búsqueda", 61, "ml9")}<span class="ml71"></span>
        ${ic(44, 28, svg`<g stroke="none"><ellipse cx="22" cy="25" rx="21" ry="2.500" fill="#e0b898"/><path d="M14 14 4 13Q1 9 5 7L13 10Q22 4 33 10L43 11Q36 16 31 15L25 17 30 25Q20 23 17 17L9 22 7 21z" fill="#44a048"/><path d="M11 12Q17 0 27 2 35 6 36 12 24 18 11 14z" fill="#93b83a"/><path d="M17 12 22 5 29 7 31 12 24 14z" fill="#668f2b"/><circle cx="4" cy="23" r="3" fill="#d04878"/><path d="M32 25 35 18 37 21 40 18 42 25z" fill="#9568c8"/></g><circle cx="6" cy="2" r="1" stroke="#4bb"/>`)}</div>
      ${slot(ic(26, 24, svg`<g stroke="none"><rect x="7" y="1" width="18" height="16" rx="1.500" fill="#f2f2f2"/><rect x="1" y="7" width="18" height="16" rx="1.500" fill="#777" fill-opacity=".9"/></g>`))}
      ${slot(ic(24, 22, svg`<g stroke="none"><path d="M5 1H14Q16 1 17 4L18 7H13L9 18Q8 20 5 20 1 20 1 14L4 3z" fill="#28a8e0"/><path d="M5 1H13L10 8Q7 10 2 10z" fill="#2a72d8"/><path d="M1 13 4 11 10 14 8 19Q3 21 1 13" fill="#d8d048"/><path d="M19 21H11Q8 21 8 18L9 15H13L16 5Q17 3 19 3 24 2 23 8L20 18z" fill="#ea6a78"/><path d="M19 5 23 5 21 13 14 13z" fill="#c868dc"/><path d="M8 18 10 14 17 15 15 21H11z" fill="#f89858"/></g>`))}
      ${slot(ic(25, 24, svg`<g stroke="none"><path d="M1 1H9L12 4H23Q24 4 24 6V22H1z" fill="#e4a21c"/><path d="M1 6H24V22H1z" fill="#fbd04c"/><path d="M5 22V17Q5 16 6 16H18Q19 16 19 17V22z" fill="#187cc8"/></g>`))}
      ${slot(ic(24, 24, svg`<defs><linearGradient id="e" x2="1" y2="0"><stop stop-color="#1ba7e8"/><stop offset="1" stop-color="#66d960"/></linearGradient></defs><g stroke="none"><circle cx="12" cy="12" r="12" fill="#1479cf"/><path d="M0 11A12 12 0 0 1 24 11Q24 16 18 17 13 17 14 14 16 9 10 8 4 7 0 12" fill="url(#e)"/><path d="M9 11Q7 18 15 20 20 21 22 18 17 26 9 23 1 18 9 11" fill="#0a4f9f"/></g>`))}
      ${slot(ic(24, 26, svg`<path d="M8 7V3H16V7" stroke="#3bb0ea" stroke-width="2"/><g stroke="none"><rect x="0" y="6" width="24" height="19" rx="2.500" fill="#f4f4f4"/><path d="M7 10H11.500V14.500H7z" fill="#e84a24"/><path d="M12.500 10H17V14.500H12.500z" fill="#78b41e"/><path d="M7 15.500H11.500V20H7z" fill="#2a9fe4"/><path d="M12.500 15.500H17V20H12.500z" fill="#fab810"/></g>`))}
      ${slot(html`<div class="app">${ic(28, 28, svg`<g stroke="none"><circle cx="14" cy="15" r="12" fill="#f7c62c"/><path d="M3.600 9A12 12 0 0 1 24.400 9H14L9 17z" fill="#e33b2e"/><path d="M3.600 9 11 21 14 27A12 12 0 0 1 3.600 9" fill="#32a350"/><circle cx="14" cy="15" r="6" fill="#fff"/><circle cx="14" cy="15" r="4.700" fill="#3878ec"/><circle cx="20.500" cy="7.500" r="7.500" fill="#0c5a48"/></g><text x="19" y="11" fill="#e8f4f0" stroke="none" font-size="9.500">J</text>`)}<span class="dot"></span></div>`)}
      ${slot(html`<div class="app act">${ic(26, 28, svg`<rect x="1" y="1" width="24" height="26" rx="2.500" fill="#ee1322" stroke="none"/><path d="M6 11.500A8 8 0 1 0 15 6.500M5.500 6.500H10.500V10.500L8.500 12.500" stroke="#fff" stroke-width="1.600"/><circle cx="13" cy="14.500" r="3.300" stroke="#fff" stroke-width="1.600"/>`)}<span class="bar"></span></div>`)}
      ${slot(html`<div class="app">${ic(24, 28, svg`<circle cx="12" cy="14" r="11.500" fill="#22d062" stroke="none"/><path d="M5 10.500Q12 8 19.500 11.500M5.500 14.500Q12 12.500 18 15.500M6.500 18.500Q12 16.500 17 19" stroke="#14241b" stroke-width="2"/>`)}<span class="dot"></span></div>`)}
      <span class="grow"></span>
      ${ic(12, 8, svg`<path d="M1 6.500 6 1.500 11 6.500" stroke="#fff" stroke-width="1.600"/>`)}
      ${ic(18, 14, svg`<path d="M3 12A3.500 3.500 0 0 1 3 6 5 5 0 0 1 12 4.500 4 4 0 0 1 14 12z" fill="#1585d8" stroke="none"/><path d="M2 0 16 13" stroke="#1b222a" stroke-width="2"/><path d="M2 0 16 13" stroke="#6690b0"/>`, "ml16")}
      <div class="col lang ml19">${t("ESP", 20)}${t("LAA", 21)}</div>
      ${ic(16, 13, svg`<path d="M1 5Q8-2 15 5M3.500 7.500Q8 3 12.500 7.500M5.500 10Q8 7.500 10.500 10" stroke="#fff" stroke-width="1.500"/><circle cx="8" cy="11.500" r="1.300" fill="#fff" stroke="none"/>`, "ml20")}
      ${ic(16, 14, svg`<path d="M1 5H4L8 1.500V12.500L4 9H1z" stroke="#fff"/><path d="M10.500 4.500Q12 7 10.500 9.500" stroke="#ccc"/><path d="M12.500 2.500Q16 7 12.500 11.500" stroke="#667"/>`, "ml8")}
      ${ic(17, 12, svg`<rect x="1" y="1" width="13" height="10" rx="2" stroke="#fff"/><path d="M3 3H7V9H3z" fill="#fff" stroke="none"/><path d="M15.500 4V8" stroke="#fff" stroke-width="1.800"/>`, "ml8")}
      <div class="col clock ml16">${t("10:07 p. m.", 59)}${t("16/06/2025", 62)}</div><span class="ml18"></span>
    </div>`;
  }

  render() {
    return html`${this.titleBar()}${this.ribbon()}
      <div class="work">${this.left()}<div class="right">${this.center()}</div></div>
      ${this.status()}${this.taskbar()}`;
  }
}
